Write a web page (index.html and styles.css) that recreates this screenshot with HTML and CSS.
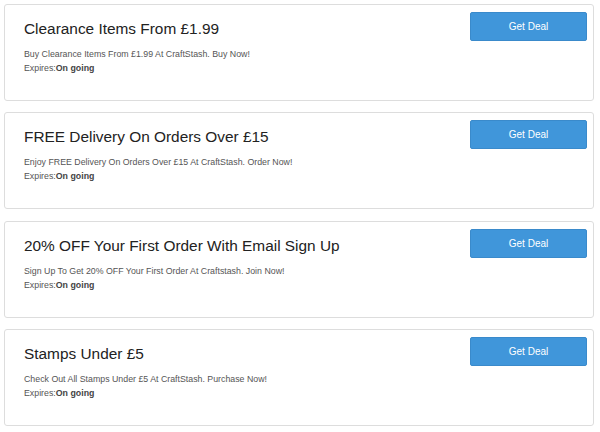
FILE: index.html
```html
<!DOCTYPE html>
<html>
<head>
<meta charset="utf-8">
<link rel="stylesheet" href="styles.css">
</head>
<body>
<div class="list">
  <div class="card">
    <div class="info">
      <h3 class="title">Clearance Items From £1.99</h3>
      <p class="desc">Buy Clearance Items From £1.99 At CraftStash. Buy Now!</p>
      <p class="exp">Expires:<b>On going</b></p>
    </div>
    <a class="btn">Get Deal</a>
  </div>
  <div class="card">
    <div class="info">
      <h3 class="title">FREE Delivery On Orders Over £15</h3>
      <p class="desc">Enjoy FREE Delivery On Orders Over £15 At CraftStash. Order Now!</p>
      <p class="exp">Expires:<b>On going</b></p>
    </div>
    <a class="btn">Get Deal</a>
  </div>
  <div class="card">
    <div class="info">
      <h3 class="title">20% OFF Your First Order With Email Sign Up</h3>
      <p class="desc">Sign Up To Get 20% OFF Your First Order At Craftstash. Join Now!</p>
      <p class="exp">Expires:<b>On going</b></p>
    </div>
    <a class="btn">Get Deal</a>
  </div>
  <div class="card">
    <div class="info">
      <h3 class="title">Stamps Under £5</h3>
      <p class="desc">Check Out All Stamps Under £5 At CraftStash. Purchase Now!</p>
      <p class="exp">Expires:<b>On going</b></p>
    </div>
    <a class="btn">Get Deal</a>
  </div>
</div>
</body>
</html>
```

FILE: styles.css
```css
html, body {
  margin: 0;
  padding: 0;
  background: #ffffff;
}
body {
  font-family: "Liberation Sans", Arial, sans-serif;
  color: #333333;
}
.list {
  display: flex;
  flex-direction: column;
  gap: 11.33px;
  padding: 4px 6px 0 4px;
}
.card {
  box-sizing: border-box;
  height: 97px;
  border: 1px solid #dddddd;
  border-radius: 3px;
  display: flex;
  justify-content: space-between;
  align-items: flex-start;
  padding: 7px 6px 0 19px;
}
.info {
  padding-top: 8px;
}
.title {
  margin: 0;
  font-size: 15.4px;
  font-weight: normal;
  line-height: 18px;
  color: #222222;
}
.desc {
  margin: 9px 0 0;
  font-size: 8.8px;
  line-height: 14px;
  color: #555555;
}
.exp {
  margin: 0;
  font-size: 8.8px;
  line-height: 14px;
  color: #555555;
}
.exp b {
  color: #444444;
  font-weight: bold;
}
.btn {
  box-sizing: border-box;
  width: 117px;
  height: 29px;
  flex: none;
  background: #4096da;
  border: 1px solid #3a8acb;
  border-radius: 2px;
  color: #ffffff;
  font-size: 10px;
  display: flex;
  align-items: center;
  justify-content: center;
}
```
